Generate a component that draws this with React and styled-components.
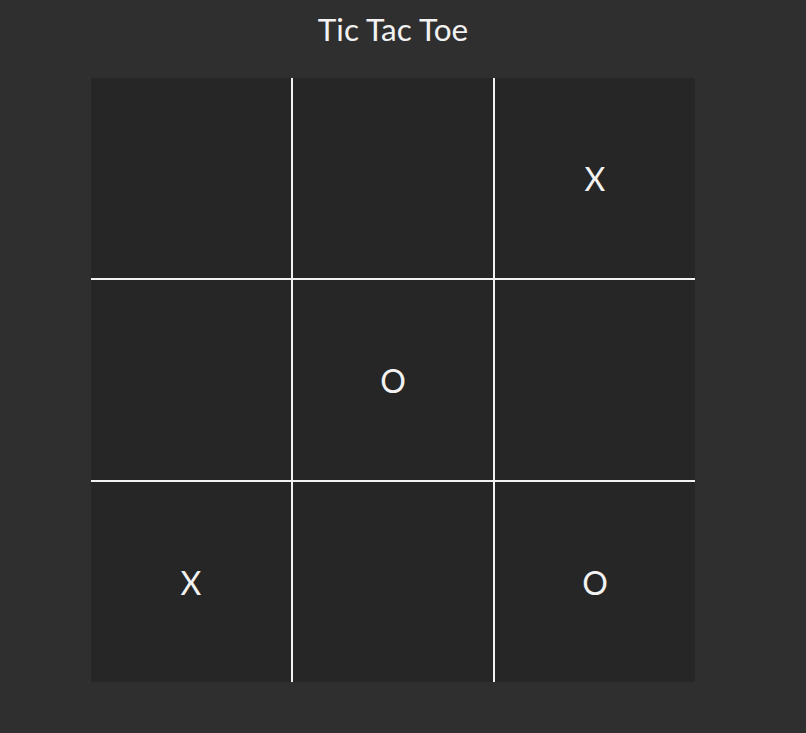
import React from "react";
import styled, { createGlobalStyle } from "styled-components";

const Global = createGlobalStyle`
  html, body {
    margin: 0;
    padding: 0;
    background: #2f2f2f;
  }
  body {
    font-family: Lato, "Open Sans", sans-serif;
    color: #f0f0f0;
  }
`;

const Page = styled.main`
  width: 786px;
  min-height: 733px;
  padding-top: 10px;
  box-sizing: border-box;
  display: flex;
  flex-direction: column;
  align-items: center;
`;

const Title = styled.h1`
  margin: 0 0 30px;
  font-size: 31.5px;
  line-height: 38px;
  font-weight: 400;
  color: #f2f2f2;
`;

const Board = styled.div`
  display: grid;
  grid-template-columns: repeat(3, 200px);
  grid-template-rows: repeat(3, 200px);
  gap: 2px;
  background: #f2f2f2;
`;

const Cell = styled.div`
  background: #262626;
  display: flex;
  align-items: center;
  justify-content: center;
  font-size: 32px;
  color: #f2f2f2;
`;

const cells = ["", "", "X", "", "O", "", "X", "", "O"];

export default function App() {
  return (
    <>
      <Global />
      <Page>
        <Title>Tic Tac Toe</Title>
        <Board>
          {cells.map((v, i) => (
            <Cell key={i}>{v}</Cell>
          ))}
        </Board>
      </Page>
    </>
  );
}
